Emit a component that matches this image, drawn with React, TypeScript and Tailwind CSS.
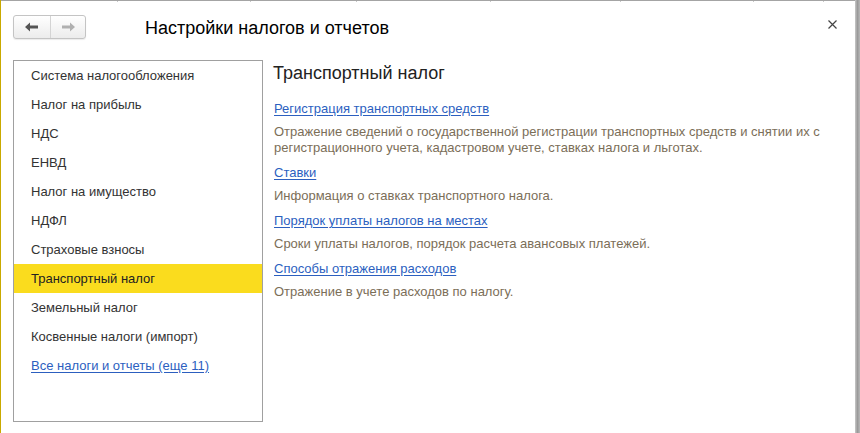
import React from "react";

const items = [
  "Система налогообложения",
  "Налог на прибыль",
  "НДС",
  "ЕНВД",
  "Налог на имущество",
  "НДФЛ",
  "Страховые взносы",
  "Транспортный налог",
  "Земельный налог",
  "Косвенные налоги (импорт)",
];

const sections = [
  {
    title: "Регистрация транспортных средств",
    desc: [
      "Отражение сведений о государственной регистрации транспортных средств и снятии их с",
      "регистрационного учета, кадастровом учете, ставках налога и льготах.",
    ],
  },
  { title: "Ставки", desc: ["Информация о ставках транспортного налога."] },
  {
    title: "Порядок уплаты налогов на местах",
    desc: ["Сроки уплаты налогов, порядок расчета авансовых платежей."],
  },
  {
    title: "Способы отражения расходов",
    desc: ["Отражение в учете расходов по налогу."],
  },
];

export default function App() {
  return (
    <div
      className="w-[860px] h-[433px] flex bg-white overflow-hidden text-[#333]"
      style={{ fontFamily: '"Liberation Sans", Arial, sans-serif' }}
    >
      <div className="w-[1px] h-full bg-[#c9a900]" />
      <div className="flex-1 flex flex-col">
        <div className="relative h-[2px] border-t border-[#a4a4a4]">
          {[117, 250, 356, 490, 620, 753, 823].map((x) => (
            <span key={x} className="absolute top-0 w-[1px] h-[1px] bg-[#c8c8c8]" style={{ left: x - 1 }} />
          ))}
        </div>
        <div className="flex items-center pl-[12px] pt-[13px] pr-[18px]">
          <div className="flex h-[24px] w-[73px] rounded-[3px] border border-[#c4c4c4] bg-gradient-to-b from-white to-[#ececec] shadow-[0_1px_1px_rgba(0,0,0,0.08)]">
            <div className="w-[37px] flex items-center justify-center border-r border-[#d4d4d4]">
              <svg width="14" height="10" viewBox="0 0 14 10">
                <path d="M0 5 L5 0.5 L5 3.5 L13 3.5 L13 6.5 L5 6.5 L5 9.5 Z" fill="#555" />
              </svg>
            </div>
            <div className="flex-1 flex items-center justify-center">
              <svg width="14" height="10" viewBox="0 0 14 10">
                <path d="M14 5 L9 0.5 L9 3.5 L1 3.5 L1 6.5 L9 6.5 L9 9.5 Z" fill="#b0b0b0" />
              </svg>
            </div>
          </div>
          <div className="ml-[59px] text-[18px] text-black leading-none mt-[2px]">
            Настройки налогов и отчетов
          </div>
          <div className="ml-auto mb-[6px]">
            <svg width="9" height="9" viewBox="0 0 9 9">
              <path d="M0.5 0.5 L8.5 8.5 M8.5 0.5 L0.5 8.5" stroke="#444" strokeWidth="1.2" />
            </svg>
          </div>
        </div>
        <div className="flex pl-[12px] mt-[21px]">
          <div className="w-[250px] h-[362px] border border-[#a0a0a0] text-[13px] flex flex-col">
            {items.map((it, i) => (
              <div
                key={it}
                className={
                  "h-[29px] flex items-center pl-[17px] " +
                  (i === 7 ? "bg-[#fadc1e] text-[#222]" : "text-[#333]")
                }
              >
                {it}
              </div>
            ))}
            <div className="h-[29px] flex items-center pl-[17px]">
              <span className="text-[#2c5fbf] underline underline-offset-2">Все налоги и отчеты (еще 11)</span>
            </div>
          </div>
          <div className="pl-[10px] flex flex-col">
            <div className="text-[18px] text-[#222] leading-none mt-[4px] mb-[19px]">Транспортный налог</div>
            {sections.map((s) => (
              <div key={s.title} className="mb-[9px] text-[13px] pl-[1px]">
                <div className="text-[#2c5fbf] underline underline-offset-2 leading-[16px]">{s.title}</div>
                <div className="mt-[7px] text-[#7b6e58] leading-[16px]">
                  {s.desc.map((d) => (
                    <div key={d}>{d}</div>
                  ))}
                </div>
              </div>
            ))}
          </div>
        </div>
      </div>
      <div className="w-[5px] h-full bg-gradient-to-r from-[#c8c8c8] via-[#9a9a9a] to-[#b8b8b8]" />
    </div>
  );
}
